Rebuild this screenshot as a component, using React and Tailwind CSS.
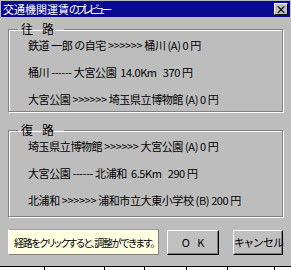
const outbound = [
  '鉄道 一郎 の自宅 >>>>>> 桶川 (A) 0 円',
  '桶川 ------ 大宮公園  14.0Km   370 円',
  '大宮公園 >>>>>> 埼玉県立博物館 (A) 0 円',
];

const inbound = [
  '埼玉県立博物館 >>>>>> 大宮公園 (A) 0 円',
  '大宮公園 ------ 北浦和  6.5Km   290 円',
  '北浦和 >>>>>> 浦和市立大東小学校 (B) 200 円',
];

function RouteGroup({ title, rows, className }) {
  return (
    <fieldset
      className={`mx-2 border border-[#808080] shadow-[inset_1px_1px_0_#fff,1px_1px_0_#fff] ${className}`}
    >
      <legend className="ml-[9px] pl-[3px] pr-[1px] text-[12px] leading-[16px] tracking-[9px]">{title}</legend>
      <div className="flex flex-col gap-[11px] pl-[19px]">
        {rows.map((r) => (
          <div key={r} className="text-[11px] leading-[16px] tracking-[-0.4px] whitespace-pre cursor-pointer">
            {r}
          </div>
        ))}
      </div>
    </fieldset>
  );
}

function Button({ children, className }) {
  return (
    <button
      className={`h-[25px] bg-[#c0c0c0] border border-t-white border-l-white border-r-black border-b-black shadow-[inset_-1px_-1px_0_#808080] text-[11px] leading-none whitespace-nowrap ${className}`}
    >
      {children}
    </button>
  );
}

export default function App() {
  return (
    <div
      className="w-[291px] h-[270px] flex flex-col bg-[#bdbdbd] text-black overflow-hidden [font-feature-settings:'palt']"
      style={{ fontFamily: '"Noto Sans CJK JP", "Liberation Sans", sans-serif' }}
    >
      <div className="flex-1 flex flex-col">
        <div className="mt-[1px] mx-[1px] h-[16px] bg-[#0a0a90] flex items-center justify-between pl-[2px] pr-[2px]">
          <span className="text-white text-[11px] leading-[16px] whitespace-nowrap">
            交通機関運賃<span className="tracking-[-3.5px]">のプレビュー</span>
          </span>
          <div className="w-[14px] h-[12px] bg-[#c0c0c0] border border-t-white border-l-white border-r-black border-b-black flex items-center justify-center text-[11px] font-bold leading-none">
            ×
          </div>
        </div>

        <RouteGroup title="往路" rows={outbound} className="mt-[4px] pb-[4px]" />
        <RouteGroup title="復路" rows={inbound} className="mt-[10px] pb-[8px]" />

        <div className="mt-[12px] flex items-start px-2">
          <div className="w-[151px] h-[26px] bg-[#ffffe1] border border-[#808080] border-l-white border-t-[#a0a0a0] flex items-center pl-[5px] text-[10px] tracking-[-1.3px] whitespace-nowrap overflow-hidden">
            経路をクリックすると、調整ができます。
          </div>
          <Button className="ml-[8px] mt-[1px] w-[52px]">O&nbsp;&nbsp;&nbsp;K</Button>
          <Button className="ml-[14px] mt-[1px] w-[50px] px-0">キャンセル</Button>
        </div>
      </div>

      <div className="h-[4px] bg-white border-t border-black flex">
        <div className="w-[45px] border-r border-black" />
        <div className="w-[60px] border-r border-black" />
        <div className="w-[40px] border-r border-black" />
        <div className="w-[42px] border-r border-black" />
        <div className="w-[41px] border-r border-black" />
        <div className="w-[47px] border-r border-black" />
      </div>
    </div>
  );
}
